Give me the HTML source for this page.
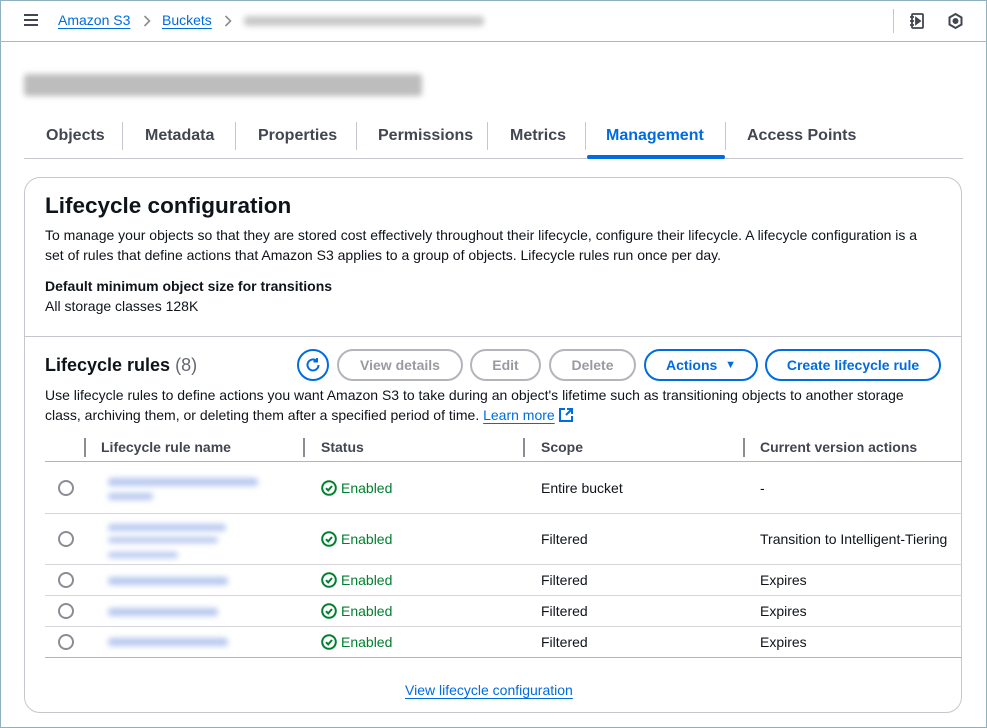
<!DOCTYPE html>
<html><head><style>
*{box-sizing:border-box;margin:0;padding:0}
body{width:987px;height:728px;overflow:hidden;background:#fff;font-family:"Liberation Sans",sans-serif;color:#0f141a;font-size:14px;position:relative}
.frame{position:absolute;left:0;top:0;width:987px;height:728px;border:1px solid #8fb0bf;pointer-events:none}
.a{position:absolute;white-space:nowrap}
.lnk{color:#006ce0;text-decoration:underline;text-underline-offset:3px}
.blur{filter:blur(3px);background:#c9c9c9;border-radius:3px}
.bblur{filter:blur(3px);background:#b7c8ef;border-radius:3px}
.btn{position:absolute;height:32px;border-radius:16px;border:2px solid;font-weight:bold;font-size:14px;display:flex;align-items:center;justify-content:center;top:349px}
.dis{border-color:#b4b4bb;color:#9a9aa1}
.pri{border-color:#006ce0;color:#006ce0}
.hd{font-weight:bold;color:#424650;font-size:14px}
.sep{position:absolute;width:2px;height:19px;background:#8c8c94}
.hl{position:absolute;left:45px;right:25px;height:1px;background:#d5d5da}
.radio{position:absolute;left:58px;width:16px;height:16px;border:2px solid #8c8c94;border-radius:50%}
.en{color:#00802f;font-weight:normal}
.chk{display:inline-block;vertical-align:-3px;margin-right:4px}
</style></head><body>
<div class="frame"></div>
<div class="a" style="left:0;right:0;top:41px;height:1px;background:#b4b4bb"></div>
<div class="a" style="left:24px;top:14px;width:14px;height:2px;background:#424650;box-shadow:0 5px 0 #424650,0 10px 0 #424650"></div>
<div class="a lnk" style="left:58px;top:12px">Amazon S3</div>
<svg class="a" style="left:143px;top:15px" width="8" height="12" viewBox="0 0 8 12" fill="none" stroke="#8c8c94" stroke-width="1.6"><path d="M1.5 1l5 5-5 5"/></svg>
<div class="a lnk" style="left:162px;top:12px">Buckets</div>
<svg class="a" style="left:224px;top:15px" width="8" height="12" viewBox="0 0 8 12" fill="none" stroke="#8c8c94" stroke-width="1.6"><path d="M1.5 1l5 5-5 5"/></svg>
<div class="a blur" style="left:244px;top:16px;width:240px;height:10px"></div>
<div class="a" style="left:893px;top:9px;width:1px;height:24px;background:#c6c6cd"></div>
<svg class="a" style="left:908px;top:12px" width="18" height="18" viewBox="0 0 18 18" fill="none" stroke="#424650" stroke-width="1.8"><rect x="4" y="2" width="11" height="14" rx="1"/><path d="M2 5h4M2 9h4M2 13h4"/><path d="M8 6l4 3-4 3z" fill="#424650"/></svg>
<svg class="a" style="left:947px;top:12px" width="17" height="18" viewBox="0 0 17 18" fill="none" stroke="#424650" stroke-width="2"><path d="M8.5 2l6 3.5v7l-6 3.5-6-3.5v-7z"/><circle cx="8.5" cy="9" r="2" fill="#424650"/></svg>
<div class="a blur" style="left:24px;top:74px;width:398px;height:22px;background:#bdbdbd"></div>
<!-- tabs -->
<div class="a" style="left:24px;right:24px;top:158px;height:1px;background:#c6c6cd"></div>
<div class="a" style="top:127px;left:46px;font-size:16px;font-weight:bold;color:#424650">Objects</div>
<div class="a" style="top:127px;left:145px;font-size:16px;font-weight:bold;color:#424650">Metadata</div>
<div class="a" style="top:127px;left:258px;font-size:16px;font-weight:bold;color:#424650">Properties</div>
<div class="a" style="top:127px;left:378px;font-size:16px;font-weight:bold;color:#424650">Permissions</div>
<div class="a" style="top:127px;left:510px;font-size:16px;font-weight:bold;color:#424650">Metrics</div>
<div class="a" style="top:127px;left:606px;font-size:16px;font-weight:bold;color:#006ce0">Management</div>
<div class="a" style="top:127px;left:747px;font-size:16px;font-weight:bold;color:#424650">Access Points</div>
<div class="a" style="left:122px;top:122px;width:1px;height:28px;background:#c6c6cd"></div>
<div class="a" style="left:235px;top:122px;width:1px;height:28px;background:#c6c6cd"></div>
<div class="a" style="left:356px;top:122px;width:1px;height:28px;background:#c6c6cd"></div>
<div class="a" style="left:487px;top:122px;width:1px;height:28px;background:#c6c6cd"></div>
<div class="a" style="left:585px;top:122px;width:1px;height:28px;background:#c6c6cd"></div>
<div class="a" style="left:725px;top:122px;width:1px;height:28px;background:#c6c6cd"></div>
<div class="a" style="left:587px;top:155px;width:138px;height:4px;background:#006ce0;border-radius:2px"></div>
<!-- container -->
<div class="a" style="left:24px;top:177px;width:938px;height:536px;border:1px solid #c6c6cd;border-radius:16px;overflow:hidden"></div>
<div class="a" style="left:45px;top:193px;font-size:22.5px;font-weight:bold">Lifecycle configuration</div>
<div class="a" style="left:45px;top:225px;line-height:20px;font-size:14px;white-space:normal;width:880px">To manage your objects so that they are stored cost effectively throughout their lifecycle, configure their lifecycle. A lifecycle configuration is a set of rules that define actions that Amazon S3 applies to a group of objects. Lifecycle rules run once per day.</div>
<div class="a" style="left:45px;top:278px;font-weight:bold;font-size:14px">Default minimum object size for transitions</div>
<div class="a" style="left:45px;top:298px;font-size:14px">All storage classes 128K</div>
<div class="a" style="left:25px;width:936px;top:336px;height:1px;background:#c6c6cd"></div>
<div class="a" style="left:45px;top:355px;font-size:18px;font-weight:bold">Lifecycle rules <span style="font-weight:normal;color:#656871">(8)</span></div>
<div class="btn pri" style="left:297px;width:32px"><svg width="18" height="18" viewBox="0 0 18 18" fill="none" stroke="#006ce0" stroke-width="2"><path d="M14.5 9a5.5 5.5 0 1 1-2-4.3"/><path d="M13 2v3.5h-3.5"/></svg></div>
<div class="btn dis" style="left:337px;width:126px">View details</div>
<div class="btn dis" style="left:470px;width:71px">Edit</div>
<div class="btn dis" style="left:549px;width:87px">Delete</div>
<div class="btn pri" style="left:644px;width:114px">Actions&nbsp;&nbsp;<span style="font-size:11px">▼</span></div>
<div class="btn pri" style="left:765px;width:176px">Create lifecycle rule</div>
<div class="a" style="left:45px;top:385px;line-height:20px;font-size:14px;white-space:normal;width:885px">Use lifecycle rules to define actions you want Amazon S3 to take during an object's lifetime such as transitioning objects to another storage class, archiving them, or deleting them after a specified period of time. <span class="lnk">Learn more</span> <svg width="14" height="14" viewBox="0 0 14 14" fill="none" stroke="#006ce0" stroke-width="2" style="vertical-align:-2px"><path d="M6 1H1v12h12V8M8 1h5v5M13 1L7 7"/></svg></div>
<!-- table -->
<div class="sep" style="left:84px;top:438px"></div>
<div class="sep" style="left:303px;top:438px"></div>
<div class="sep" style="left:523px;top:438px"></div>
<div class="sep" style="left:743px;top:438px"></div>
<div class="a hd" style="left:101px;top:439px">Lifecycle rule name</div>
<div class="a hd" style="left:321px;top:439px">Status</div>
<div class="a hd" style="left:541px;top:439px">Scope</div>
<div class="a hd" style="left:760px;top:439px">Current version actions</div>
<div class="hl" style="top:461px;background:#b4b4bb"></div>
<div class="hl" style="top:513px"></div>
<div class="hl" style="top:564px"></div>
<div class="hl" style="top:595px"></div>
<div class="hl" style="top:626px"></div>
<div class="hl" style="top:657px;background:#b4b4bb"></div>
<div class="radio" style="top:480px"></div>
<div class="radio" style="top:531px"></div>
<div class="radio" style="top:572px"></div>
<div class="radio" style="top:603px"></div>
<div class="radio" style="top:634px"></div>
<div class="a bblur" style="left:108px;top:478px;width:150px;height:8px"></div>
<div class="a bblur" style="left:108px;top:493px;width:45px;height:7px"></div>
<div class="a bblur" style="left:108px;top:524px;width:118px;height:7px"></div>
<div class="a bblur" style="left:108px;top:537px;width:110px;height:6px"></div>
<div class="a bblur" style="left:108px;top:552px;width:70px;height:6px"></div>
<div class="a bblur" style="left:108px;top:577px;width:120px;height:8px"></div>
<div class="a bblur" style="left:108px;top:608px;width:110px;height:8px"></div>
<div class="a bblur" style="left:108px;top:638px;width:120px;height:8px"></div>
<svg width="0" height="0" style="position:absolute"><defs><symbol id="ck" viewBox="0 0 16 16"><circle cx="8" cy="8" r="6.8" fill="none" stroke="#00802f" stroke-width="2"/><path d="M5 8.2l2.2 2.2L11 6" fill="none" stroke="#00802f" stroke-width="2"/></symbol></defs></svg>
<div class="a en" style="left:321px;top:480px"><svg class="chk" width="16" height="16"><use href="#ck"/></svg>Enabled</div>
<div class="a en" style="left:321px;top:531px"><svg class="chk" width="16" height="16"><use href="#ck"/></svg>Enabled</div>
<div class="a en" style="left:321px;top:572px"><svg class="chk" width="16" height="16"><use href="#ck"/></svg>Enabled</div>
<div class="a en" style="left:321px;top:603px"><svg class="chk" width="16" height="16"><use href="#ck"/></svg>Enabled</div>
<div class="a en" style="left:321px;top:634px"><svg class="chk" width="16" height="16"><use href="#ck"/></svg>Enabled</div>
<div class="a" style="left:541px;top:480px">Entire bucket</div>
<div class="a" style="left:541px;top:531px">Filtered</div>
<div class="a" style="left:541px;top:572px">Filtered</div>
<div class="a" style="left:541px;top:603px">Filtered</div>
<div class="a" style="left:541px;top:634px">Filtered</div>
<div class="a" style="left:760px;top:480px">-</div>
<div class="a" style="left:760px;top:531px;width:201px;overflow:hidden">Transition to Intelligent-Tiering</div>
<div class="a" style="left:760px;top:572px">Expires</div>
<div class="a" style="left:760px;top:603px">Expires</div>
<div class="a" style="left:760px;top:634px">Expires</div>
<div class="a lnk" style="left:405px;top:682px">View lifecycle configuration</div>
</body></html>
